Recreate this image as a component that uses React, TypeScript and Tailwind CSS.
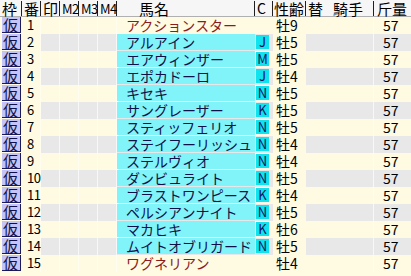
import React from 'react';

interface Horse {
  no: number;
  name: string;
  c: string;
  sex: string;
}

const horses: Horse[] = [
  { no: 1, name: 'アクションスター', c: '', sex: '牡9' },
  { no: 2, name: 'アルアイン', c: 'J', sex: '牡5' },
  { no: 3, name: 'エアウィンザー', c: 'M', sex: '牡5' },
  { no: 4, name: 'エポカドーロ', c: 'J', sex: '牡4' },
  { no: 5, name: 'キセキ', c: 'N', sex: '牡5' },
  { no: 6, name: 'サングレーザー', c: 'K', sex: '牡5' },
  { no: 7, name: 'スティッフェリオ', c: 'N', sex: '牡5' },
  { no: 8, name: 'ステイフーリッシュ', c: 'N', sex: '牡4' },
  { no: 9, name: 'ステルヴィオ', c: 'N', sex: '牡4' },
  { no: 10, name: 'ダンビュライト', c: 'N', sex: '牡5' },
  { no: 11, name: 'ブラストワンピース', c: 'K', sex: '牡4' },
  { no: 12, name: 'ペルシアンナイト', c: 'N', sex: '牡5' },
  { no: 13, name: 'マカヒキ', c: 'K', sex: '牡6' },
  { no: 14, name: 'ムイトオブリガード', c: 'N', sex: '牡5' },
  { no: 15, name: 'ワグネリアン', c: '', sex: '牡4' },
];

const cols = 'grid grid-cols-[22px_19px_19px_19px_19px_19px_138px_18px_33px_68px_37px]';
const head = 'border-r border-[#202020] my-[1px] leading-[15px] whitespace-nowrap';

const App: React.FC = () => {
  return (
    <div
      className="w-[411px] h-[276px] bg-[#fffbe2] overflow-hidden text-black"
      style={{ fontFamily: '"Noto Sans CJK JP", "Noto Sans", sans-serif' }}
    >
      {/* ヘッダー */}
      <div className={`${cols} h-[17px] bg-[#f6f6f6] border-b border-[#b0b0b0] text-[15px]`}>
        <div className={`${head} pl-[2px]`}>枠</div>
        <div className={`${head} pl-[2px]`}>番</div>
        <div className={`${head} pl-[2px]`}>印</div>
        <div className={`${head} pl-[2px] text-[13px] tracking-[-0.5px]`}>M2</div>
        <div className={`${head} pl-[2px] text-[13px] tracking-[-0.5px]`}>M3</div>
        <div className={`${head} pl-[2px] text-[13px] tracking-[-0.5px]`}>M4</div>
        <div className={`${head} pl-[22px]`}>馬名</div>
        <div className={`${head} pl-[2px] text-[14px]`}>C</div>
        <div className={`${head} pl-[1px]`}>性齢</div>
        <div className={`${head} pl-[2px]`}>
          替<span className="ml-[10px]">騎手</span>
        </div>
        <div className="pl-[3px] my-[1px] leading-[15px] whitespace-nowrap">斤量</div>
      </div>

      {/* 出走馬一覧 */}
      {horses.map((h) => {
        const even = h.no % 2 === 0;
        const rowBg = even ? 'bg-[#e8e8e8]' : 'bg-[#fffbe2]';
        const line = even ? 'border-r border-[#f8f8f8]' : 'border-r border-[#fffdf0]';
        return (
          <div key={h.no} className={`${cols} h-[17px] text-[14px] leading-[16px]`}>
            <div className="pl-[2px] pb-[1px]">
              <div className="w-[19px] h-[16px] bg-[#c4c4f6] border-r border-b border-[#1c1c5c] text-[15px] leading-[15px] text-[#10104a] pl-[1px]">
                仮
              </div>
            </div>
            <div className="pl-[5px] bg-[#fffbe2] border-r border-[#fffdf0] text-[13px] tracking-[-0.5px]">{h.no}</div>
            <div className={`${rowBg} ${line}`} />
            <div className={`${rowBg} ${line}`} />
            <div className={`${rowBg} ${line}`} />
            <div className={`${rowBg} ${line}`} />
            <div className={`${rowBg} pb-[1px]`}>
              {h.c ? (
                <div className="h-[16px] bg-[#80f4f8] pl-[9px] text-[#101048] whitespace-nowrap">{h.name}</div>
              ) : (
                <div className="h-[16px] pl-[9px] text-[#8a1c1c] whitespace-nowrap">{h.name}</div>
              )}
            </div>
            <div className={`${rowBg} pl-[1px] pr-[4px] pb-[2px] pt-[1px]`}>
              {h.c && (
                <div className="h-[14px] bg-[#10e2ee] text-[#101060] text-[13px] leading-[14px] text-center">
                  {h.c}
                </div>
              )}
            </div>
            <div className="pl-[3px] bg-[#fffbe2]">{h.sex}</div>
            <div className={`${rowBg} ${line}`} />
            <div className={`${rowBg} pl-[9px]`}>57</div>
          </div>
        );
      })}
    </div>
  );
};

export default App;
